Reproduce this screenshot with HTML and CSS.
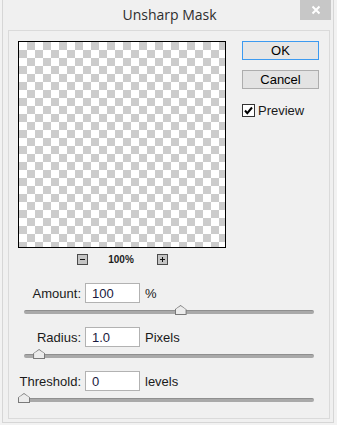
FILE: index.html
```html
<!DOCTYPE html>
<html lang="en">
<head>
    <meta charset="UTF-8">
    <title>Unsharp Mask</title>
    <link rel="stylesheet" href="styles.css">
</head>
<body>
    <div class="window">
        <!-- Title bar -->
        <div class="titlebar">
            <span></span>
            <div class="title">Unsharp Mask</div>
            <div class="close-cell">
                <div class="close">
                    <svg width="10" height="10" viewBox="0 0 10 10"><path d="M1.5 1.5 L8.5 8.5 M8.5 1.5 L1.5 8.5" stroke="#fff" stroke-width="2"/></svg>
                </div>
            </div>
        </div>

        <div class="panel">
            <div class="top">
                <div class="preview-col">
                    <div class="preview"></div>
                    <div class="zoom-row">
                        <span class="zoom-btn">
                            <svg width="11" height="11" viewBox="0 0 11 11"><rect x="0.5" y="0.5" width="10" height="10" fill="#c4c4c4" stroke="#4a4a4a"/><path d="M3 5.5 H8" stroke="#111" stroke-width="1"/></svg>
                        </span>
                        <span class="zoom-value">100%</span>
                        <span class="zoom-btn">
                            <svg width="11" height="11" viewBox="0 0 11 11"><rect x="0.5" y="0.5" width="10" height="10" fill="#c4c4c4" stroke="#4a4a4a"/><path d="M3 5.5 H8 M5.5 3 V8" stroke="#111" stroke-width="1"/></svg>
                        </span>
                    </div>
                </div>
                <div class="actions">
                    <button class="btn btn-ok">OK</button>
                    <button class="btn">Cancel</button>
                    <label class="check">
                        <span class="check-box">
                            <svg width="13" height="13" viewBox="0 0 13 13"><rect x="0.5" y="0.5" width="12" height="12" fill="#fff" stroke="#333"/><path d="M3 6.5 L5.3 9.2 L10 3.5" fill="none" stroke="#000" stroke-width="2"/></svg>
                        </span>
                        Preview
                    </label>
                </div>
            </div>

            <div class="field first">
                <span class="field-label">Amount:</span>
                <input class="field-input" type="text" value="100">
                <span class="field-unit">%</span>
            </div>
            <div class="slider">
                <div class="track"></div>
                <span class="thumb" style="left: calc(54% - 6px)"></span>
            </div>

            <div class="field">
                <span class="field-label">Radius:</span>
                <input class="field-input" type="text" value="1.0">
                <span class="field-unit">Pixels</span>
            </div>
            <div class="slider">
                <div class="track"></div>
                <span class="thumb" style="left: calc(5.2% - 6px)"></span>
            </div>

            <div class="field">
                <span class="field-label">Threshold:</span>
                <input class="field-input" type="text" value="0">
                <span class="field-unit">levels</span>
            </div>
            <div class="slider">
                <div class="track"></div>
                <span class="thumb" style="left: calc(0% - 6px)"></span>
            </div>
        </div>
    </div>
</body>
</html>
```

FILE: styles.css
```css
/* Dialog styles */
* {
    box-sizing: border-box;
}

body {
    margin: 0;
    background: #f2f2f2;
    font-family: "Liberation Sans", Arial, sans-serif;
    font-size: 13px;
    color: #1a1a1a;
}

.window {
    margin-left: 2px;
    width: 332px;
    height: 423px;
    background: #f0f0f0;
    border: 1px solid #d6d6d6;
    border-top: none;
}

/* Title bar */
.titlebar {
    height: 30px;
    display: grid;
    grid-template-columns: 1fr auto 1fr;
    align-items: start;
}

.title {
    font-family: "Open Sans", "Noto Sans", sans-serif;
    font-size: 14px;
    color: #2e2e2e;
    line-height: 30px;
    margin-left: 3px;
}

.close-cell {
    display: flex;
    justify-content: flex-end;
    padding-right: 2px;
}

.close {
    width: 31px;
    height: 20px;
    background: #c7c7c7;
    display: flex;
    align-items: center;
    justify-content: center;
}

/* Main panel */
.panel {
    margin-left: 5px;
    width: 322px;
    height: 389px;
    border: 1px solid #dadada;
    background: #f0f0f0;
    padding: 10px 0 0 9px;
}

.top {
    display: flex;
}

.preview {
    width: 208px;
    height: 207px;
    border: 1px solid #000;
    background: repeating-conic-gradient(#cccccc 0 25%, #ffffff 0 50%) 0 0 / 16px 16px;
}

.zoom-row {
    display: flex;
    justify-content: center;
    align-items: center;
    margin-top: 6px;
    height: 11px;
}

.zoom-btn {
    display: block;
    width: 11px;
    height: 11px;
}

.zoom-btn svg {
    display: block;
}

.zoom-value {
    width: 69px;
    text-align: center;
    font-size: 10px;
    font-weight: bold;
    color: #1c1c1c;
    padding-right: 2px;
}

.actions {
    margin-left: 16px;
    width: 77px;
    display: flex;
    flex-direction: column;
}

.btn {
    width: 77px;
    height: 19px;
    padding: 0;
    font-family: "Liberation Sans", Arial, sans-serif;
    font-size: 13px;
    color: #000;
    background: #e3e3e3;
    border: 1px solid #adadad;
    margin-bottom: 10px;
}

.btn-ok {
    border-color: #3c9af0;
    background: #e6e6e6;
}

.check {
    display: flex;
    align-items: center;
    gap: 3px;
    margin-top: 4px;
}

.check-box svg {
    display: block;
}

/* Fields and sliders */
.field {
    display: grid;
    grid-template-columns: 63px 55px auto;
    column-gap: 4px;
    align-items: center;
    height: 20px;
    margin-top: 12px;
}

.field.first {
    margin-top: 18px;
}

.field-label {
    text-align: right;
}

.field-unit {
    margin-left: 1px;
}

.field-input {
    width: 55px;
    height: 20px;
    border: 1px solid #b2b2b2;
    background: #fff;
    padding: 0 0 0 6px;
    font-family: "Liberation Sans", Arial, sans-serif;
    font-size: 13px;
    color: #1a1a40;
}

.slider {
    position: relative;
    margin: 2px 15px 0 6px;
    height: 10px;
}

.track {
    position: absolute;
    left: 0;
    right: 0;
    top: 5px;
    height: 4px;
    border-radius: 2px;
    background: #a9a9a9;
    border-top: 1px solid #8f8f8f;
}

.thumb {
    position: absolute;
    top: 0;
    width: 12px;
    height: 10px;
    background: #7a7a7a;
    clip-path: polygon(0 45%, 50% 0, 100% 45%, 100% 100%, 0 100%);
}

.thumb::after {
    content: "";
    position: absolute;
    inset: 1px;
    background: #ececec;
    clip-path: polygon(0 42%, 50% 0, 100% 42%, 100% 100%, 0 100%);
}
```
